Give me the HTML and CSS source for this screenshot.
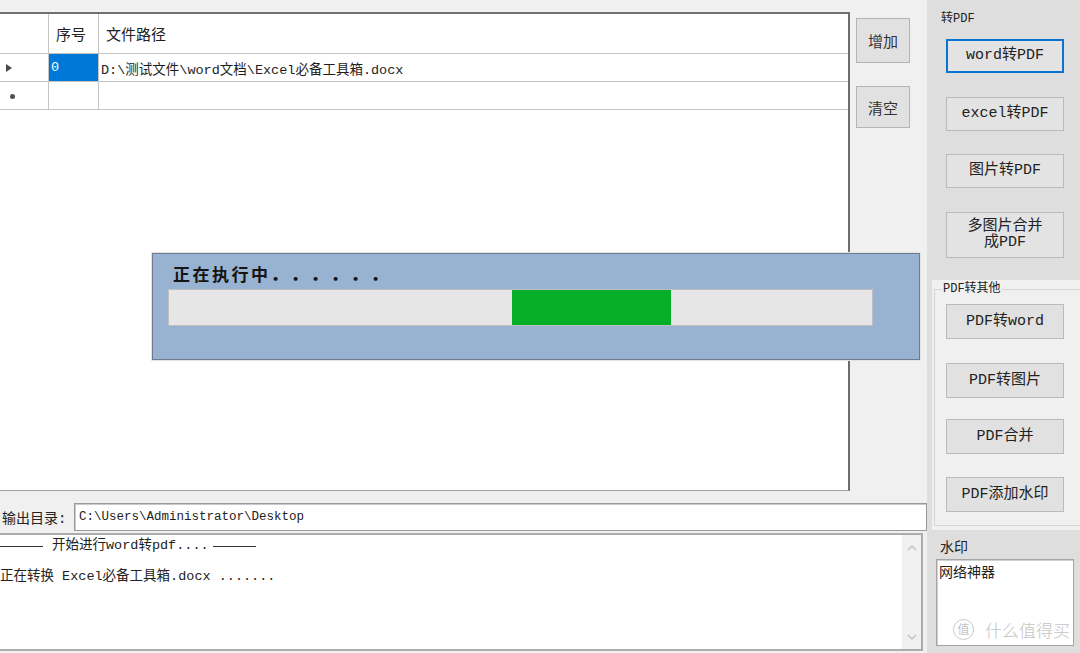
FILE: index.html
```html
<!DOCTYPE html>
<html lang="zh-CN">
<head>
<meta charset="utf-8">
<title>PDF转换工具</title>
<link rel="stylesheet" href="styles.css">
</head>
<body>
<div class="app">
  <div class="main">
    <div class="top">
      <div class="grid">
        <div class="grid-row head">
          <div class="cell rh"></div>
          <div class="cell c1">序号</div>
          <div class="cell c2">文件路径</div>
        </div>
        <div class="grid-row">
          <div class="cell rh"><span class="tri"></span></div>
          <div class="cell c1 sel mono">0</div>
          <div class="cell c2 mono">D:\测试文件\word文档\Excel必备工具箱.docx</div>
        </div>
        <div class="grid-row">
          <div class="cell rh"><span class="newrow"></span></div>
          <div class="cell c1"></div>
          <div class="cell c2"></div>
        </div>
      </div>
      <div class="side-btns">
        <button class="btn btn-add">增加</button>
        <button class="btn btn-clear">清空</button>
      </div>
    </div>
    <div class="out-row">
      <div class="out-label mono">输出目录:</div>
      <div class="out-input mono">C:\Users\Administrator\Desktop</div>
    </div>
    <div class="log">
      <div class="log-text mono">
        <div class="log-line"><span class="rule"></span><span class="log-msg">开始进行word转pdf....</span><span class="rule"></span></div>
        <div class="log-line">正在转换 Excel必备工具箱.docx .......</div>
      </div>
      <div class="scrollbar">
        <svg width="12" height="8" viewBox="0 0 12 8"><polyline points="2,6 6,2 10,6" fill="none" stroke="#c2c2c2" stroke-width="1.5"/></svg>
        <svg width="12" height="8" viewBox="0 0 12 8"><polyline points="2,2 6,6 10,2" fill="none" stroke="#c2c2c2" stroke-width="1.5"/></svg>
      </div>
    </div>
  </div>

  <div class="right">
    <div class="sec1">
      <div class="sec-title mono">转PDF</div>
      <button class="rbtn mono focus b-word">word转PDF</button>
      <button class="rbtn mono b-excel">excel转PDF</button>
      <button class="rbtn mono b-img">图片转PDF</button>
      <button class="rbtn mono b-multi">多图片合并<br>成PDF</button>
    </div>
    <div class="sec2">
      <fieldset class="group">
        <legend class="sec-title mono">PDF转其他</legend>
        <button class="rbtn mono g1">PDF转word</button>
        <button class="rbtn mono g2">PDF转图片</button>
        <button class="rbtn mono g3">PDF合并</button>
        <button class="rbtn mono g4">PDF添加水印</button>
      </fieldset>
    </div>
    <div class="sec3">
      <div class="wm-title">水印</div>
      <div class="wm-box">网络神器
        <div class="site-mark"><span class="site-circle">值</span><span class="site-name">什么值得买</span></div>
      </div>
    </div>
  </div>

  <div class="progress-dialog">
    <div class="pd-title">正在执行中<span class="pd-dots">．．．．．．</span></div>
    <div class="pd-bar"><div class="pd-fill"></div></div>
  </div>
</div>
</body>
</html>
```
FILE: styles.css
```css
* { box-sizing: border-box; margin: 0; padding: 0; }
html, body { width: 1080px; height: 653px; overflow: hidden; }
body {
  background: #f0f0f0;
  font-family: "Noto Sans CJK SC", sans-serif;
  color: #222;
  text-spacing-trim: space-all;
}
.mono { font-family: "Liberation Mono", "Noto Sans CJK SC", monospace; }

.app { position: relative; display: flex; width: 1080px; height: 653px; }
.main { width: 927px; display: flex; flex-direction: column; }

/* ---------- grid ---------- */
.top { display: flex; align-items: flex-start; height: 503px; padding-top: 12px; }
.grid {
  width: 850px;
  height: 479px;
  background: #fff;
  border-top: 2px solid #707070;
  border-right: 2px solid #6c6c6c;
  border-bottom: 1px solid #a0a0a0;
}
.grid-row { display: flex; height: 28px; border-bottom: 1px solid #c4c4c4; }
.grid-row.head { height: 40px; }
.cell { display: flex; align-items: center; height: 100%; white-space: nowrap; font-size: 13.5px; }
.rh { width: 49px; border-right: 1px solid #c4c4c4; padding-left: 6px; }
.c1 { width: 50px; border-right: 1px solid #c4c4c4; padding-left: 2px; }
.c2 { flex: 1; padding-left: 2px; color: #1e1e1e; }
.head .cell { font-size: 15px; color: #222; }
.head .c1, .head .c2 { padding-left: 7px; }
.sel { background: #0078d7; color: #fff; height: 27px; }
.tri {
  width: 0; height: 0;
  border-left: 6px solid #4a4a4a;
  border-top: 4.5px solid transparent;
  border-bottom: 4.5px solid transparent;
}
.newrow { width: 5px; height: 5px; margin-left: 4px; margin-top: 2px; border-radius: 50%; background: #505050; }

.side-btns { display: flex; flex-direction: column; margin-left: 6px; }
.btn {
  width: 54px;
  background: #e1e1e1;
  border: 1px solid #b4b4b4;
  font-family: "Noto Sans CJK SC", sans-serif;
  font-size: 15px;
  color: #333;
}
.btn-add { margin-top: 6px; height: 45px; }
.btn-clear { margin-top: 23px; height: 42px; }

/* ---------- output row ---------- */
.out-row { display: flex; align-items: center; height: 28px; }
.out-label { width: 74px; padding-left: 2px; font-size: 14px; color: #222; white-space: nowrap; }
.out-input {
  flex: 1;
  height: 28px;
  display: flex;
  align-items: center;
  padding-left: 4px;
  background: #fff;
  border: 1px solid #9a9a9a;
  box-shadow: inset 1px 1px 0 #c9c9c9;
  font-size: 12.5px;
  color: #222;
}

/* ---------- log ---------- */
.log {
  display: flex;
  width: 923px;
  height: 118px;
  margin-top: 2px;
  background: #fff;
  border: 2px solid #acacac;
  border-left: none;
}
.log-text { flex: 1; font-size: 13.5px; color: #222; }
.log-line { height: 22px; line-height: 22px; white-space: nowrap; display: flex; align-items: center; }
.log-line + .log-line { margin-top: 9px; }
.rule { display: inline-block; width: 43px; height: 1px; background: #333; }
.log-msg { margin: 0 4px 0 9px; }
.scrollbar {
  width: 19px;
  background: #f0f0f0;
  display: flex;
  flex-direction: column;
  justify-content: space-between;
  align-items: center;
  padding: 9px 0 8px;
}

/* ---------- right panel ---------- */
.right { width: 153px; display: flex; flex-direction: column; background: #dedede; }
.sec1 { height: 280px; display: flex; flex-direction: column; padding-left: 19px; }
.sec-title { font-size: 12px; line-height: 14px; color: #222; }
.sec1 .sec-title { margin-top: 12px; margin-left: -5px; }
.rbtn {
  width: 118px;
  height: 34px;
  background: #e3e3e3;
  border: 1px solid #bababa;
  font-size: 15px;
  line-height: 16px;
  color: #222;
}
.rbtn.focus { border: 2px solid #0a74d2; }
.b-word { margin-top: 13px; }
.b-excel { margin-top: 24px; }
.b-img { margin-top: 23px; }
.b-multi { margin-top: 24px; height: 46px; }

.sec2 { height: 250px; margin-left: 5px; background: #f0f0f0; padding-left: 2px; padding-top: 1px; }
.group {
  height: 245px;
  border: 1px solid #d6d6d6;
  border-right: none;
  display: flex;
  flex-direction: column;
  padding-left: 11px;
}
.group legend { padding: 0 1px; margin-left: -4px; line-height: 16px; }
.group .rbtn { height: 35px; background: #e1e1e1; }
.g1 { margin-top: 7px; }
.g2 { margin-top: 24px; }
.g3 { margin-top: 21px; }
.g4 { margin-top: 23px; }

.sec3 { height: 123px; padding-left: 9px; }
.wm-title { margin-top: 8px; margin-left: 4px; font-size: 14px; line-height: 16px; color: #222; }
.wm-box {
  position: relative;
  width: 138px;
  height: 87px;
  margin-top: 5px;
  padding: 1px 2px;
  background: #fff;
  border: 1px solid #a5a5a5;
  box-shadow: inset 1px 1px 0 #d0d0d0;
  font-size: 14px;
  line-height: 20px;
  color: #222;
}
.site-mark {
  position: absolute;
  right: 3px;
  bottom: 5px;
  display: flex;
  align-items: center;
  gap: 11px;
  color: #c4c4c4;
}
.site-circle {
  width: 21px;
  height: 21px;
  border: 1.5px solid #c8c8c8;
  border-radius: 50%;
  font-size: 12px;
  line-height: 18px;
  text-align: center;
}
.site-name { font-size: 17px; line-height: 20px; font-weight: 300; letter-spacing: 0; }

/* ---------- progress dialog ---------- */
.progress-dialog {
  position: absolute;
  left: 152px;
  top: 253px;
  width: 768px;
  height: 107px;
  background: #98b3d2;
  border: 1px solid #6c7b8f;
  box-shadow: 0 0 0 1px #e4e4e4;
  padding-left: 15px;
}
.pd-title {
  margin-top: 9px;
  padding-left: 5px;
  font-size: 17px;
  line-height: 22px;
  font-weight: 700;
  letter-spacing: 2.5px;
  color: #151515;
  white-space: nowrap;
}
.pd-dots { letter-spacing: 3px; font-weight: 900; }
.pd-bar {
  display: flex;
  width: 705px;
  height: 37px;
  margin-top: 4px;
  background: #e6e6e6;
  border: 1px solid #bfbfbf;
}
.pd-fill { margin-left: 343px; width: 159px; height: 100%; background: #06af27; }
```
